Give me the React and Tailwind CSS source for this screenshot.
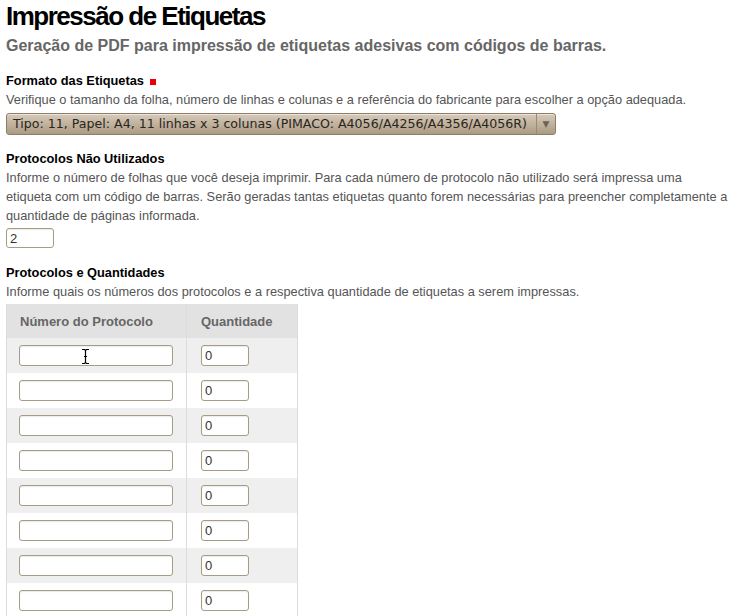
import React from 'react'

const rows = [1, 2, 3, 4, 5, 6, 7, 8, 9, 10]

function TextCursor() {
  return (
    <svg className="absolute left-[62px] top-[3px]" width="9" height="17" viewBox="0 0 9 17">
      <path d="M1 1.5h2.5l1 1 1-1H8M4.5 2.5v12M1 15.5h2.5l1-1 1 1H8M3 8.5h3" fill="none" stroke="#fff" strokeWidth="3" />
      <path d="M1 1.5h2.5l1 1 1-1H8M4.5 2.5v12M1 15.5h2.5l1-1 1 1H8M3 8.5h3" fill="none" stroke="#000" strokeWidth="1.2" />
    </svg>
  )
}

export default function App() {
  return (
    <div className="min-h-screen bg-white px-[6px] pt-[1px] font-['Liberation_Sans',Arial,sans-serif] text-[12.8px] leading-[19px] text-[#555]">
      <h1 className="text-[26px] leading-[30px] font-bold tracking-[-1.5px] text-black">Impressão de Etiquetas</h1>
      <h2 className="mt-[4px] text-[16px] leading-[22px] font-bold text-[#666]">
        Geração de PDF para impressão de etiquetas adesivas com códigos de barras.
      </h2>

      <div className="mt-[14px]">
        <div className="flex items-center gap-[6px] font-bold text-black">
          Formato das Etiquetas
          <span className="inline-block w-[6px] h-[6px] bg-[#e8000b] mt-[2px]" />
        </div>
        <p>Verifique o tamanho da folha, número de linhas e colunas e a referência do fabricante para escolher a opção adequada.</p>
        <div className="mt-[4px] flex w-[550px] h-[22px] rounded-[3px] border border-[#8d7e69] bg-gradient-to-b from-[#d6cab9] to-[#ab9b83] shadow-[inset_0_1px_0_rgba(255,255,255,0.5)] font-['DejaVu_Sans',sans-serif] text-[12.6px] leading-[20px] text-[#2a2520]">
          <div className="flex-1 pl-[6px] whitespace-nowrap overflow-hidden">
            Tipo: 11, Papel: A4, 11 linhas x 3 colunas (PIMACO: A4056/A4256/A4356/A4056R)
          </div>
          <div className="w-[19px] border-l border-[#9a8b75] flex items-center justify-center text-[9px] text-[#6f6452]">▼</div>
        </div>
      </div>

      <div className="mt-[14px]">
        <div className="font-bold text-black">Protocolos Não Utilizados</div>
        <p>
          Informe o número de folhas que você deseja imprimir. Para cada número de protocolo não utilizado será impressa uma etiqueta com um código de barras. Serão geradas tantas etiquetas quanto forem necessárias para preencher completamente a quantidade de páginas informada.
        </p>
        <input
          defaultValue="2"
          className="mt-[3px] block w-[48px] h-[20px] rounded-[3px] border border-[#a59c86] bg-white pl-[3px] text-[13px] text-[#333] outline-none shadow-[inset_0_1px_1px_rgba(0,0,0,0.08)]"
        />
      </div>

      <div className="mt-[15px]">
        <div className="font-bold text-black">Protocolos e Quantidades</div>
        <p>Informe quais os números dos protocolos e a respectiva quantidade de etiquetas a serem impressas.</p>
        <table className="mt-[3px] w-[292px] border-collapse border-x border-[#dcdcdc]">
          <thead>
            <tr className="bg-[#e2e2e2] h-[34px] text-left text-[13px] font-bold text-[#666]">
              <th className="w-[180px] pl-[13px] border-r border-[#dcdcdc]">Número do Protocolo</th>
              <th className="pl-[14px]">Quantidade</th>
            </tr>
          </thead>
          <tbody>
            {rows.map((r, i) => (
              <tr key={r} className={i % 2 === 0 ? 'h-[35px] bg-[#efefef]' : 'h-[35px] bg-white'}>
                <td className="pl-[12px] border-r border-[#dcdcdc]">
                  <div className="relative">
                    <input className="block w-[154px] h-[21px] rounded-[3px] border border-[#a59c86] bg-white outline-none shadow-[inset_0_1px_1px_rgba(0,0,0,0.08)]" />
                    {i === 0 && <TextCursor />}
                  </div>
                </td>
                <td className="pl-[14px]">
                  <input
                    defaultValue="0"
                    className="block w-[48px] h-[21px] rounded-[3px] border border-[#a59c86] bg-white pl-[3px] text-[13px] text-[#333] outline-none shadow-[inset_0_1px_1px_rgba(0,0,0,0.08)]"
                  />
                </td>
              </tr>
            ))}
          </tbody>
        </table>
      </div>
    </div>
  )
}
